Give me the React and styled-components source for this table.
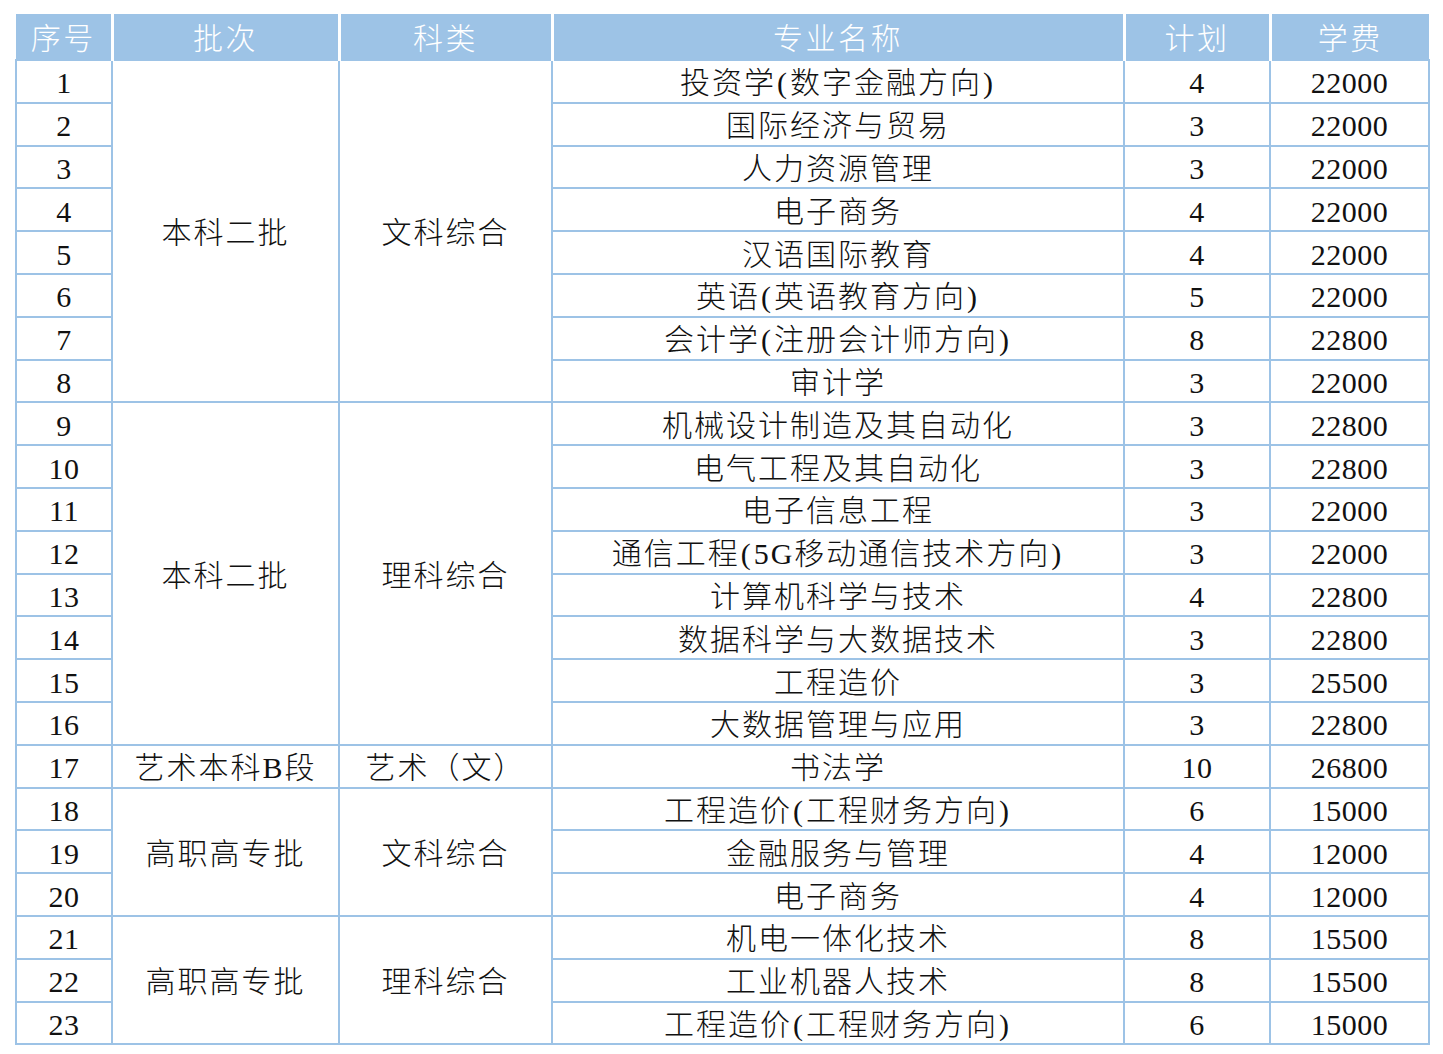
import React from "react";
import styled, { createGlobalStyle } from "styled-components";

const GlobalStyle = createGlobalStyle`
  html, body {
    margin: 0;
    padding: 0;
    background: #ffffff;
  }
  body {
    font-family: "Liberation Serif", "Noto Sans CJK SC", serif;
    color: #111111;
  }
`;

const groups = [
  {
    batch: "本科二批",
    kind: "文科综合",
    items: [
      ["投资学(数字金融方向)", 4, 22000],
      ["国际经济与贸易", 3, 22000],
      ["人力资源管理", 3, 22000],
      ["电子商务", 4, 22000],
      ["汉语国际教育", 4, 22000],
      ["英语(英语教育方向)", 5, 22000],
      ["会计学(注册会计师方向)", 8, 22800],
      ["审计学", 3, 22000],
    ],
  },
  {
    batch: "本科二批",
    kind: "理科综合",
    items: [
      ["机械设计制造及其自动化", 3, 22800],
      ["电气工程及其自动化", 3, 22800],
      ["电子信息工程", 3, 22000],
      ["通信工程(5G移动通信技术方向)", 3, 22000],
      ["计算机科学与技术", 4, 22800],
      ["数据科学与大数据技术", 3, 22800],
      ["工程造价", 3, 25500],
      ["大数据管理与应用", 3, 22800],
    ],
  },
  {
    batch: "艺术本科B段",
    kind: "艺术（文）",
    items: [["书法学", 10, 26800]],
  },
  {
    batch: "高职高专批",
    kind: "文科综合",
    items: [
      ["工程造价(工程财务方向)", 6, 15000],
      ["金融服务与管理", 4, 12000],
      ["电子商务", 4, 12000],
    ],
  },
  {
    batch: "高职高专批",
    kind: "理科综合",
    items: [
      ["机电一体化技术", 8, 15500],
      ["工业机器人技术", 8, 15500],
      ["工程造价(工程财务方向)", 6, 15000],
    ],
  },
];

const columns = [
  { title: "序号", width: 96 },
  { title: "批次", width: 227 },
  { title: "科类", width: 213 },
  { title: "专业名称", width: 572 },
  { title: "计划", width: 146 },
  { title: "学费", width: 159 },
];

// half-width brackets get a little air, as in the source sheet
const spaced = (text) =>
  text.split(/([()])/).map((part, i) =>
    part === "(" || part === ")" ? <Paren key={i}>{part}</Paren> : part
  );

const App = () => {
  let index = 0;
  return (
    <Page>
      <GlobalStyle />
      <Table>
        <colgroup>
          {columns.map((c) => (
            <col key={c.title} style={{ width: c.width }} />
          ))}
        </colgroup>
        <thead>
          <tr>
            {columns.map((c) => (
              <HeadCell key={c.title}>{c.title}</HeadCell>
            ))}
          </tr>
        </thead>
        <tbody>
          {groups.map((g) =>
            g.items.map((item, i) => {
              index += 1;
              return (
                <Row key={index}>
                  <Cell $num>{index}</Cell>
                  {i === 0 && (
                    <Cell rowSpan={g.items.length}>{g.batch}</Cell>
                  )}
                  {i === 0 && (
                    <Cell rowSpan={g.items.length}>{g.kind}</Cell>
                  )}
                  <Cell>{spaced(item[0])}</Cell>
                  <Cell $num>{item[1]}</Cell>
                  <Cell $num>{item[2]}</Cell>
                </Row>
              );
            })
          )}
        </tbody>
      </Table>
    </Page>
  );
};

export default App;

const Page = styled.div`
  padding: 14px 0 0 15px;
`;

const Table = styled.table`
  border-collapse: collapse;
  table-layout: fixed;
  width: 1413px;
`;

const HeadCell = styled.th`
  height: 40px;
  padding: 5px 0 0 0;
  background: #9dc3e6;
  color: #ffffff;
  font-size: 30px;
  font-weight: 300;
  letter-spacing: 2.5px;
  border-left: 3px solid #ffffff;
  border-right: 3px solid #ffffff;
  text-align: center;
  vertical-align: middle;
  line-height: 1;

  &:first-child {
    border-left: 0;
  }
  &:last-child {
    border-right: 0;
  }
`;

const Row = styled.tr`
  height: 42.8px;
`;

const Cell = styled.td`
  padding: 4px 0 0 0;
  border: 2px solid #9dc3e6;
  font-size: 30px;
  font-weight: ${(p) => (p.$num ? "normal" : 300)};
  letter-spacing: ${(p) => (p.$num ? "0.5px" : "2px")};
  text-align: center;
  vertical-align: middle;
  line-height: 1;
  white-space: nowrap;
`;

const Paren = styled.span`
  margin: 0 1px;
`;
